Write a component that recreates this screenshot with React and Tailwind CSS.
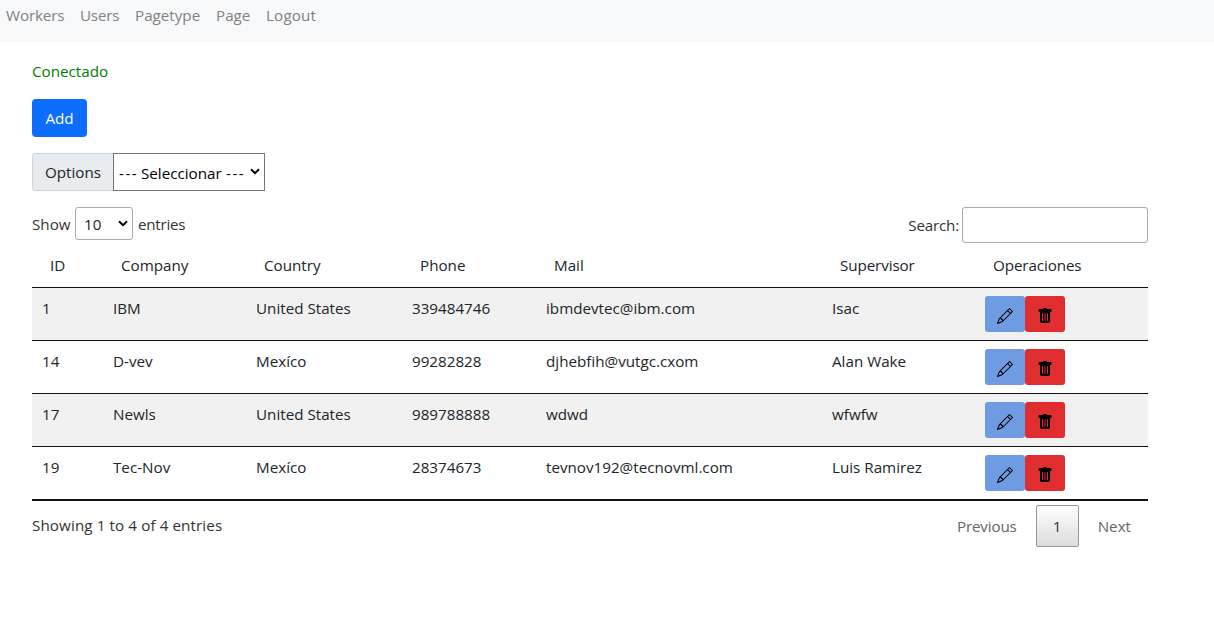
import React from "react";
import { BsPencil, BsTrashFill } from "react-icons/bs";

const links = [
  { label: "Workers", width: "w-[58px] tracking-[-0.14px]" },
  { label: "Users", width: "w-[39px] tracking-[-0.2px]" },
  { label: "Pagetype", width: "w-[65px]" },
  { label: "Page", width: "w-[34px]" },
  { label: "Logout", width: "w-[50px] tracking-[0.16px]" },
];

const columns = [
  { label: "ID", width: "w-[71px]" },
  { label: "Company", width: "w-[143px]" },
  { label: "Country", width: "w-[156px]" },
  { label: "Phone", width: "w-[134px]" },
  { label: "Mail", width: "w-[286px]" },
  { label: "Supervisor", width: "w-[153px] tracking-[-0.1px]" },
  { label: "Operaciones", width: "w-[173px] tracking-[-0.1px]" },
];

const rows = [
  ["1", "IBM", "United States", "339484746", "ibmdevtec@ibm.com", "Isac"],
  ["14", "D-vev", "Mexíco", "99282828", "djhebfih@vutgc.cxom", "Alan Wake"],
  ["17", "Newls", "United States", "989788888", "wdwd", "wfwfw"],
  ["19", "Tec-Nov", "Mexíco", "28374673", "tevnov192@tecnovml.com", "Luis Ramirez"],
];

function Chevron({ className }) {
  return (
    <svg viewBox="0 0 10 7" className={`pointer-events-none h-[7px] w-[10px] shrink-0 ${className}`}>
      <path d="M1 1.2 5 5.2 9 1.2" fill="none" stroke="#000" strokeWidth="2" />
    </svg>
  );
}

function Navbar() {
  return (
    <nav className="flex h-[42px] gap-4 bg-[#f8f9fa] pt-[3px] pl-1.5 text-[#808182]">
      {links.map((link) => (
        <a key={link.label} href="#" className={`${link.width} whitespace-nowrap`}>
          {link.label}
        </a>
      ))}
    </nav>
  );
}

function Toolbar() {
  return (
    <div className="mt-4 flex h-9 items-start justify-between text-[#333]">
      <label className="flex items-center">
        <span className="w-[43px]">Show</span>
        <span className="flex h-[33px] w-[58px] items-center rounded-[3px] border border-[#aaa] pl-2 text-[#212529]">
          <span className="w-[34px]">10</span>
          <Chevron className="" />
        </span>
        <span className="ml-[5px] tracking-[-0.25px]">entries</span>
      </label>
      <label className="flex items-center">
        <span className="mr-[3px] tracking-[-0.2px]">Search:</span>
        <input type="text" className="h-9 w-[186px] rounded-[3px] border border-[#aaa] bg-transparent" />
      </label>
    </div>
  );
}

function WorkersTable() {
  return (
    <table className="mt-1 w-[1116px] table-fixed border-collapse border-b-2 border-b-[#111] text-left">
      <thead>
        <tr className="h-10">
          {columns.map((c) => (
            <th key={c.label} className={`${c.width} px-[18px] pt-1.5 pb-2.5 align-top font-normal`}>
              {c.label}
            </th>
          ))}
        </tr>
      </thead>
      <tbody>
        {rows.map((row) => (
          <tr key={row[0]} className="h-[53px] border-t border-[#111] odd:bg-[#f1f1f1]">
            {row.map((cell, i) => (
              <td key={i} className="px-2.5 pt-2 align-top">
                {cell}
              </td>
            ))}
            <td className="px-2.5 pt-2 align-top">
              <div className="flex text-black">
                <button className="flex h-9 w-10 items-center justify-center rounded-[3px] bg-[#6f9be3] pt-1">
                  <BsPencil size={16} />
                </button>
                <button className="flex h-9 w-10 items-center justify-center rounded-[3px] bg-[#e02d2f] pt-1">
                  <BsTrashFill size={16} />
                </button>
              </div>
            </td>
          </tr>
        ))}
      </tbody>
    </table>
  );
}

function Footer() {
  return (
    <div className="mt-1 flex justify-between text-[#333]">
      <div className="pt-2 tracking-[0.1px]">Showing 1 to 4 of 4 entries</div>
      <div className="flex items-center text-[#666]">
        <span className="mr-[19px] tracking-[-0.15px]">Previous</span>
        <span className="flex h-[42px] w-[43px] items-center justify-center rounded-[2px] border border-[#979797] bg-linear-to-b from-white to-[#dcdcdc] text-[#333]">
          1
        </span>
        <span className="mr-[17px] ml-[19px]">Next</span>
      </div>
    </div>
  );
}

export default function App() {
  return (
    <div className="h-[626px] overflow-hidden bg-white font-['Open_Sans','Noto_Sans',sans-serif] text-[15.2px] leading-6 text-[#212529]">
      <Navbar />
      <main className="ml-8 w-[1116px] pt-[17px]">
        <p className="text-[#008000]">Conectado</p>
        <button className="mt-4 flex h-[38px] w-[55px] items-center justify-center rounded bg-[#0d6efd] text-white">
          Add
        </button>
        <div className="mt-4 flex h-[38px]">
          <span className="flex w-[81px] items-center justify-center rounded-l border border-r-0 border-[#ced4da] bg-[#e9ecef]">
            Options
          </span>
          <span className="flex w-[152px] items-center justify-between border border-[#767676] pt-0.5 pr-1 pl-[5px] text-black">
            <span className="flex whitespace-nowrap">
              <span className="w-[22px] tracking-[1.5px]">---</span>
              <span className="w-[85px]">Seleccionar</span>
              <span className="tracking-[1.5px]">---</span>
            </span>
            <Chevron className="mb-1" />
          </span>
        </div>
        <Toolbar />
        <WorkersTable />
        <Footer />
      </main>
    </div>
  );
}
